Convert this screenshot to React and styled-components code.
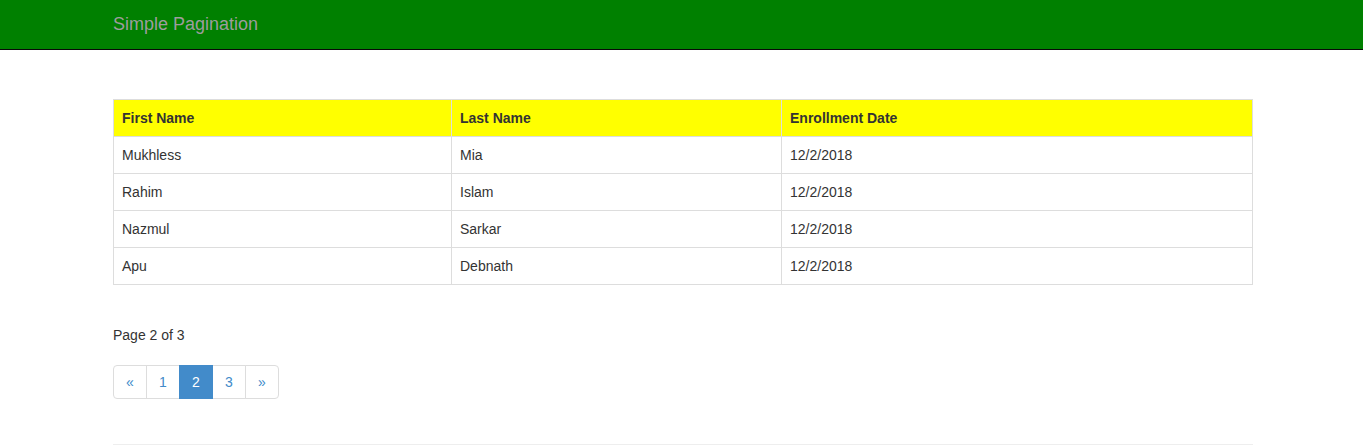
import styled, { createGlobalStyle } from "styled-components";

const GlobalStyle = createGlobalStyle`
  body {
    margin: 0;
    padding-left: 3px;
    font-family: "Liberation Sans", Arial, sans-serif;
    font-size: 14px;
    line-height: 1.42857;
    color: #333;
    background: #fff;
  }
`;

const Navbar = styled.nav`
  height: 49px;
  background-color: #008000;
  border-bottom: 1px solid #080808;
  margin-left: -3px;
  .navbar__inner {
    width: 1140px;
    margin: 0 auto;
    padding-left: 3px;
    display: flex;
    align-items: center;
    height: 100%;
  }
  .navbar__brand {
    font-size: 18px;
    line-height: 20px;
    color: #9d9d9d;
    text-decoration: none;
    margin-top: -1px;
  }
`;

const Container = styled.main`
  width: 1140px;
  margin: 0 auto;
  padding-top: 49px;
`;

const Table = styled.table`
  width: 100%;
  border-collapse: collapse;
  border-spacing: 0;
  border: 1px solid #ddd;
  margin-bottom: 40px;
  th,
  td {
    padding: 8px;
    border: 1px solid #ddd;
    text-align: left;
    vertical-align: top;
    line-height: 20px;
  }
  th {
    font-weight: bold;
    background-color: #ffff00;
  }
`;

const PageInfo = styled.p`
  margin: 0;
  line-height: 20px;
`;

const Pager = styled.ul`
  display: flex;
  list-style: none;
  padding: 0;
  margin: 20px 0 0;
  li + li {
    margin-left: -1px;
  }
  li:first-child a {
    border-radius: 4px 0 0 4px;
  }
  li:last-child a {
    border-radius: 0 4px 4px 0;
  }
`;

const PageLink = styled.a`
  display: block;
  width: 34px;
  box-sizing: border-box;
  text-align: center;
  padding: 6px 0;
  line-height: 20px;
  text-decoration: none;
  border: 1px solid ${({ $active }) => ($active ? "#428bca" : "#ddd")};
  background-color: ${({ $active }) => ($active ? "#428bca" : "#fff")};
  color: ${({ $active }) => ($active ? "#fff" : "#428bca")};
  position: relative;
  z-index: ${({ $active }) => ($active ? 2 : 1)};
`;

const Rule = styled.hr`
  margin: 45px 0 0;
  border: 0;
  border-top: 1px solid #eee;
`;

const students = [
  { first: "Mukhless", last: "Mia", date: "12/2/2018" },
  { first: "Rahim", last: "Islam", date: "12/2/2018" },
  { first: "Nazmul", last: "Sarkar", date: "12/2/2018" },
  { first: "Apu", last: "Debnath", date: "12/2/2018" },
];

const pages = ["«", "1", "2", "3", "»"];

const App = () => {
  return (
    <>
      <GlobalStyle />
      <Navbar>
        <div className="navbar__inner">
          <a className="navbar__brand" href="#">
            Simple Pagination
          </a>
        </div>
      </Navbar>
      <Container>
        <Table>
          <thead>
            <tr>
              <th style={{ width: 321 }}>First Name</th>
              <th style={{ width: 313 }}>Last Name</th>
              <th>Enrollment Date</th>
            </tr>
          </thead>
          <tbody>
            {students.map((s) => (
              <tr key={s.first}>
                <td>{s.first}</td>
                <td>{s.last}</td>
                <td>{s.date}</td>
              </tr>
            ))}
          </tbody>
        </Table>
        <PageInfo>Page 2 of 3</PageInfo>
        <Pager>
          {pages.map((p) => (
            <li key={p}>
              <PageLink href="#" $active={p === "2"}>
                {p}
              </PageLink>
            </li>
          ))}
        </Pager>
        <Rule />
      </Container>
    </>
  );
};

export default App;
